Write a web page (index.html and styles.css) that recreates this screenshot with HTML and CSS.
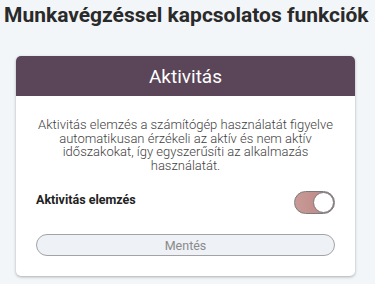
FILE: index.html
```
<!DOCTYPE html>
<html lang="hu">
<head>
<meta charset="utf-8">
<link rel="stylesheet" href="styles.css">
</head>
<body>
<h1 class="page-title">Munkavégzéssel kapcsolatos funkciók</h1>
<section class="card">
  <header class="card-header">Aktivitás</header>
  <div class="card-body">
    <p class="desc">Aktivitás elemzés a számítógép használatát figyelve automatikusan érzékeli az aktív és nem aktív időszakokat, így egyszerűsíti az alkalmazás használatát.</p>
    <div class="setting-row">
      <span class="setting-label">Aktivitás elemzés</span>
      <span class="toggle"><span class="knob"></span></span>
    </div>
    <button class="save-btn" type="button">Mentés</button>
  </div>
</section>
</body>
</html>
```
FILE: styles.css
```
html, body {
  margin: 0;
  padding: 0;
}
body {
  background: #f3f6f9;
  font-family: Roboto, "Noto Sans", sans-serif;
  width: 375px;
  height: 284px;
  overflow: hidden;
}
.page-title {
  margin: 0;
  padding: 3px 0 0 4px;
  font-size: 21px;
  font-weight: 700;
  color: #2a2a2a;
  line-height: 24px;
  white-space: nowrap;
}
.card {
  margin: 29px 20px 0 16px;
  background: #fff;
  border-radius: 5px;
  box-shadow: 0 1px 3px rgba(0, 0, 0, 0.3);
  overflow: hidden;
}
.card-header {
  height: 40px;
  background: #5a4658;
  color: #fff;
  font-size: 19px;
  display: flex;
  align-items: center;
  justify-content: center;
}
.card-body {
  padding: 22px 20px 20px 20px;
}
.desc {
  margin: 0 -6px 19px;
  text-align: center;
  font-size: 13px;
  font-weight: 300;
  line-height: 13.6px;
  color: #3f3f3f;
}
.setting-row {
  display: flex;
  justify-content: space-between;
  align-items: flex-start;
}
.setting-label {
  font-size: 12.5px;
  font-weight: 700;
  color: #222;
  margin-top: 1px;
}
.toggle {
  width: 39px;
  height: 21px;
  border: 1px solid #7b7b7b;
  border-radius: 12px;
  background: linear-gradient(90deg, #c99a97, #b98582);
  position: relative;
  margin-top: 0;
}
.knob {
  position: absolute;
  right: 0;
  top: 0;
  width: 19px;
  height: 19px;
  border: 1px solid #7b7b7b;
  border-radius: 50%;
  background: #fff;
}
.save-btn {
  display: block;
  width: 100%;
  height: 22px;
  margin-top: 20px;
  padding: 0;
  border: 1px solid #a3a3a3;
  border-radius: 11px;
  background: #eef1f5;
  color: #8a8a8a;
  font-family: Roboto, "Noto Sans", sans-serif;
  font-size: 12.5px;
}
```
